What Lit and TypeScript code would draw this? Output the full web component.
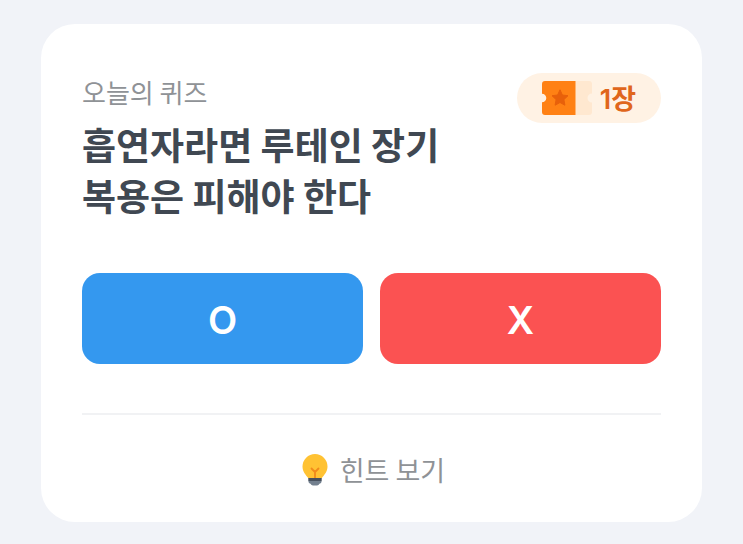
import { LitElement, html, css } from "lit";
import { customElement } from "lit/decorators.js";

@customElement("app-root")
export class AppRoot extends LitElement {
  static styles = css`
    :host {
      display: block;
      box-sizing: border-box;
      min-height: 100vh;
      padding: 24px 41px 21px;
      background: #f1f3f8;
      font-family: "Noto Sans CJK KR", "Noto Sans", sans-serif;
    }
    .card {
      padding: 49px 41px 32px;
      border-radius: 34px;
      background: #ffffff;
    }
    .head {
      display: flex;
      justify-content: space-between;
      align-items: flex-start;
    }
    .label {
      margin: 0;
      font-size: 26px;
      line-height: 38px;
      color: #8f9296;
    }
    .badge {
      display: flex;
      align-items: center;
      gap: 8px;
      box-sizing: border-box;
      height: 50px;
      padding: 0 25px;
      border-radius: 25px;
      background: #fff2e4;
      color: #e0661b;
      font-family: Inter, "Noto Sans CJK KR", sans-serif;
      font-size: 27px;
      font-weight: 600;
      line-height: 46px;
    }
    .count {
      padding-top: 3px;
    }
    .ticket {
      display: block;
      width: 50px;
      height: 34px;
    }
    .title {
      margin: -4px 0 52px;
      font-size: 37px;
      font-weight: 600;
      line-height: 51px;
      color: #404852;
    }
    .answers {
      display: grid;
      grid-template-columns: 1fr 1fr;
      gap: 17px;
    }
    .answer {
      height: 91px;
      padding: 2px 0 0;
      border: 0;
      border-radius: 18px;
      color: #ffffff;
      font-family: Inter, "Noto Sans CJK KR", sans-serif;
      font-size: 38px;
      font-weight: 600;
      cursor: pointer;
    }
    .yes {
      background: #3498ef;
    }
    .no {
      background: #fb5252;
    }
    .rule {
      height: 2px;
      margin: 49px 0 34px;
      border: 0;
      background: #f1f2f4;
    }
    .hint {
      display: flex;
      align-items: center;
      justify-content: center;
      gap: 12px;
      width: 100%;
      padding: 0 0 0 4px;
      border: 0;
      background: none;
      color: #8f9296;
      font-family: inherit;
      font-size: 27px;
      line-height: 41px;
      cursor: pointer;
    }
    .bulb {
      display: block;
      width: 26px;
      height: 32px;
    }
  `;

  render() {
    return html`
      <main class="card">
        <div class="head">
          <p class="label">오늘의 퀴즈</p>
          <div class="badge">
            <svg class="ticket" viewBox="0 0 50 34" aria-hidden="true">
              <path
                fill="#ffe8d0"
                d="M33 0H47Q50 0 50 3V12.500A4.500 4.500 0 0 0 50 21.500V31Q50 34 47 34H33Z"
              />
              <path
                fill="#ff8114"
                d="M3 0H33.500V34H3Q0 34 0 31V21.300A4.300 4.300 0 0 0 0 12.700V3Q0 0 3 0Z"
              />
              <path
                fill="#e8600a"
                stroke="#e8600a"
                stroke-width="1"
                stroke-linejoin="round"
                d="M18 8.800L20.400 14L26 14.700L21.900 18.600L22.900 24.200L18 21.500L13.100 24.200L14.100 18.600L10 14.700L15.600 14Z"
              />
            </svg>
            <span class="count">1장</span>
          </div>
        </div>
        <h1 class="title">흡연자라면 루테인 장기<br />복용은 피해야 한다</h1>
        <div class="answers">
          <button class="answer yes" type="button">O</button>
          <button class="answer no" type="button">X</button>
        </div>
        <hr class="rule" />
        <button class="hint" type="button">
          <svg class="bulb" viewBox="0 0 26 32" aria-hidden="true">
            <path
              fill="#ffc233"
              d="M13 0A12.500 12.500 0 0 1 25.500 12.500C25.500 17.500 22.500 20.500 19.500 24.500H6.500C3.500 20.500 0.500 17.500 0.500 12.500A12.500 12.500 0 0 1 13 0Z"
            />
            <path
              fill="none"
              stroke="#f08a1c"
              stroke-width="1.800"
              stroke-linecap="round"
              stroke-linejoin="round"
              d="M9.500 14.500L13 18L16.500 14.500M13 18V24"
            />
            <path fill="#47515e" d="M6.300 24H19.700V27H6.300Z" />
            <path fill="#73808f" d="M6.300 27H19.700Q19.500 29.500 17.500 29.700Q16.700 31.500 15 31.500H11Q9.300 31.500 8.500 29.700Q6.500 29.500 6.300 27Z" />
          </svg>
          <span>힌트 보기</span>
        </button>
      </main>
    `;
  }
}
